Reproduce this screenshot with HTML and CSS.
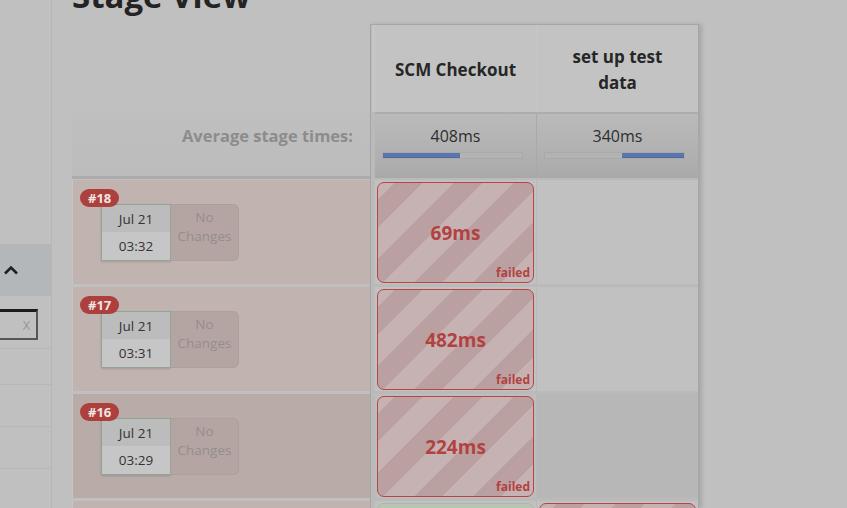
FILE: index.html
```html
<!DOCTYPE html>
<html>
<head>
<meta charset="utf-8">
<link rel="stylesheet" href="styles.css">
</head>
<body>
<div class="page">
  <aside class="sidebar">
    <div class="side-band">
      <svg class="chev" width="16" height="10" viewBox="0 0 16 10"><path d="M2 8.5 L8 2.5 L14 8.5" fill="none" stroke="#1f1f1f" stroke-width="2.6"/></svg>
    </div>
    <div class="side-input"><span class="side-x">x</span></div>
    <div class="side-item s1"></div>
    <div class="side-item s2"></div>
    <div class="side-item s3"></div>
    <div class="side-item s4"></div>
  </aside>
  <main class="main">
    <h1 class="title">Stage View</h1>
    <div class="table">
      <div class="left-col">
        <div class="left-head"></div>
        <div class="avg-label">Average stage times:</div>
        <div class="lrow">
          <span class="badge">#18</span>
          <div class="date"><div class="d-top">Jul 21</div><div class="d-bot">03:32</div></div>
          <div class="changes">No<br>Changes</div>
        </div>
        <div class="lrow">
          <span class="badge">#17</span>
          <div class="date"><div class="d-top">Jul 21</div><div class="d-bot">03:31</div></div>
          <div class="changes">No<br>Changes</div>
        </div>
        <div class="lrow dark">
          <span class="badge">#16</span>
          <div class="date"><div class="d-top">Jul 21</div><div class="d-bot">03:29</div></div>
          <div class="changes">No<br>Changes</div>
        </div>
        <div class="lrow last"></div>
      </div>
      <div class="stages">
        <div class="srow shead">
          <div class="hcell">SCM Checkout</div>
          <div class="hcell">set up test<br>data</div>
        </div>
        <div class="srow savg">
          <div class="acell"><div class="atime">408ms</div><div class="bar"><div class="fill" style="margin-left:0;width:77px"></div></div></div>
          <div class="acell"><div class="atime">340ms</div><div class="bar"><div class="fill" style="margin-left:77px;width:65px"></div></div></div>
        </div>
        <div class="srow body">
          <div class="cell"><div class="failed"><span class="ms">69ms</span><span class="flabel">failed</span></div></div>
          <div class="cell"></div>
        </div>
        <div class="srow body">
          <div class="cell"><div class="failed"><span class="ms">482ms</span><span class="flabel">failed</span></div></div>
          <div class="cell"></div>
        </div>
        <div class="srow body dark">
          <div class="cell"><div class="failed"><span class="ms">224ms</span><span class="flabel">failed</span></div></div>
          <div class="cell"></div>
        </div>
        <div class="srow body last">
          <div class="cell"><div class="success"></div></div>
          <div class="cell"><div class="failed"></div></div>
        </div>
      </div>
    </div>
  </main>
</div>
</body>
</html>
```

FILE: styles.css
```css
* { box-sizing: border-box; }
html, body { margin: 0; padding: 0; }
body {
  background: #c0c0c0;
  font-family: "Open Sans", "Noto Sans", sans-serif;
  color: #2b2b2b;
  width: 847px;
  height: 508px;
  overflow: hidden;
}
.page { display: flex; height: 508px; overflow: hidden; }

.sidebar {
  width: 52px;
  flex: none;
  border-right: 1px solid #b6b6b6;
  padding-top: 244px;
  display: flex;
  flex-direction: column;
}
.side-band {
  height: 52px;
  background: #b4b7ba;
  display: flex;
  align-items: center;
  padding-left: 3px;
}
.chev { display: block; }
.side-input {
  margin-top: 13px;
  width: 38px;
  height: 31px;
  border-top: 3px solid #1b1b1b;
  border-right: 2px solid #565656;
  border-bottom: 2px solid #565656;
  display: flex;
  justify-content: flex-end;
  align-items: center;
  padding-right: 5px;
}
.side-x { color: #8a8a8a; font-size: 15px; line-height: 1; font-family: "DejaVu Sans", sans-serif; font-weight: 300; }
.side-item { border-bottom: 1px solid #b8b8b8; width: 51px; }
.s1 { height: 9px; }
.s2 { height: 36px; }
.s3 { height: 42px; }
.s4 { height: 42px; }

.main { padding-left: 20px; flex: 1; }
.title {
  margin: -21px 0 11px;
  font-size: 33px;
  line-height: 34px;
  font-weight: 700;
  color: #232323;
}
.table { display: flex; align-items: flex-start; }

.left-col { width: 298px; flex: none; }
.left-head { height: 89px; }
.avg-label {
  height: 66px;
  background: linear-gradient(#bfbfbf, #bcbcbc);
  text-align: right;
  padding: 11px 17px 0 0;
  font-size: 16.5px;
  font-weight: 700;
  color: #8c8c8c;
  border-bottom: 3px solid #acacac;
}
.lrow {
  position: relative;
  height: 104px;
  margin-top: 3px;
  background: #c1b3b0;
  border-left: 1px solid #c6c6c6;
  display: flex;
  padding: 24px 0 0 28px;
  align-items: flex-start;
}
.avg-label + .lrow { margin-top: 1px; }
.lrow.dark { background: #b9aba8; }
.lrow.last { height: 10px; }
.badge {
  position: absolute;
  left: 7px;
  top: 9px;
  height: 18px;
  padding: 0 8px;
  border-radius: 9px;
  background: #ad403d;
  color: #f0e6e6;
  font-size: 13px;
  font-weight: 700;
  line-height: 18px;
  z-index: 2;
}
.date {
  width: 70px;
  height: 57px;
  border: 1px solid #8fa596;
  box-shadow: 0 1px 2px rgba(0,0,0,0.15);
  font-size: 13.5px;
  color: #333;
  text-align: center;
  display: flex;
  flex-direction: column;
}
.d-top { height: 27px; background: #bcbcbc; line-height: 28px; }
.d-bot { flex: 1; background: #c6c6c6; line-height: 28px; }
.changes {
  width: 68px;
  height: 57px;
  background: #b4a5a2;
  border: 1px solid #ae9f9c;
  border-left: 0;
  border-radius: 0 6px 6px 0;
  color: #968d8b;
  font-size: 13.5px;
  line-height: 19px;
  text-align: center;
  padding-top: 3px;
}

.stages {
  width: 329px;
  flex: none;
  border: 1px solid #a6a6a6;
  border-bottom: 0;
  box-shadow: 3px 0 4px rgba(0,0,0,0.13);
  background: #bababa;
  padding-left: 4px;
  height: 484px;
  overflow: hidden;
}
.srow {
  display: grid;
  grid-template-columns: 161px 161px;
  column-gap: 1px;
  background: #c8c8c8;
}
.shead { height: 87px; background: #c6c6c6; margin-left: -3px; padding-left: 3px; }
.hcell {
  background: #c3c3c3;
  display: flex;
  align-items: center;
  justify-content: center;
  text-align: center;
  font-size: 17px;
  font-weight: 700;
  line-height: 26px;
  padding-top: 2px;
  color: #262626;
}
.savg {
  height: 66px;
  background: #a9a9a9;
  border-top: 2px solid #adadad;
  border-bottom: 2px solid #a9a9a9;
}
.acell {
  background: linear-gradient(#bababa, #b0b0b0 70%, #aaaaaa);
  padding: 7px 13px 0 7px;
  text-align: center;
}
.atime { font-size: 16px; line-height: 30px; color: #2e2e2e; height: 31px; padding-left: 6px; }
.bar {
  height: 7px;
  background: #b3b3b3;
  border: 1px solid #a9a9a9;
  display: flex;
}
.fill { height: 5px; background: #5a76ac; border-bottom: 1px solid #4e6a9e; }

.body { height: 104px; margin-top: 3px; background: #b9b9b9; }
.savg + .body { margin-top: 2px; }
.body.last { height: 10px; }
.cell { background: #c1c1c1; padding: 2px 0 0 2px; overflow: hidden; }
.body.dark .cell { background: #b7b7b7; }
.body.dark .cell:first-child { background: #bdbdbd; }
.failed, .success {
  position: relative;
  width: 157px;
  height: 101px;
  border: 1.5px solid #ba4343;
  border-radius: 7px;
  background: repeating-linear-gradient(-45deg, #c6b2b2 0 22px, #bba0a1 22px 42px);
  display: flex;
  align-items: center;
  justify-content: center;
}
.success {
  border-color: #a7b9a5;
  background: #b9c4b5;
}
.ms { font-size: 19px; font-weight: 700; color: #b24242; }
.flabel {
  position: absolute;
  right: 3px;
  bottom: 2px;
  font-size: 12px;
  font-weight: 700;
  color: #b24242;
  line-height: 14px;
}
```
